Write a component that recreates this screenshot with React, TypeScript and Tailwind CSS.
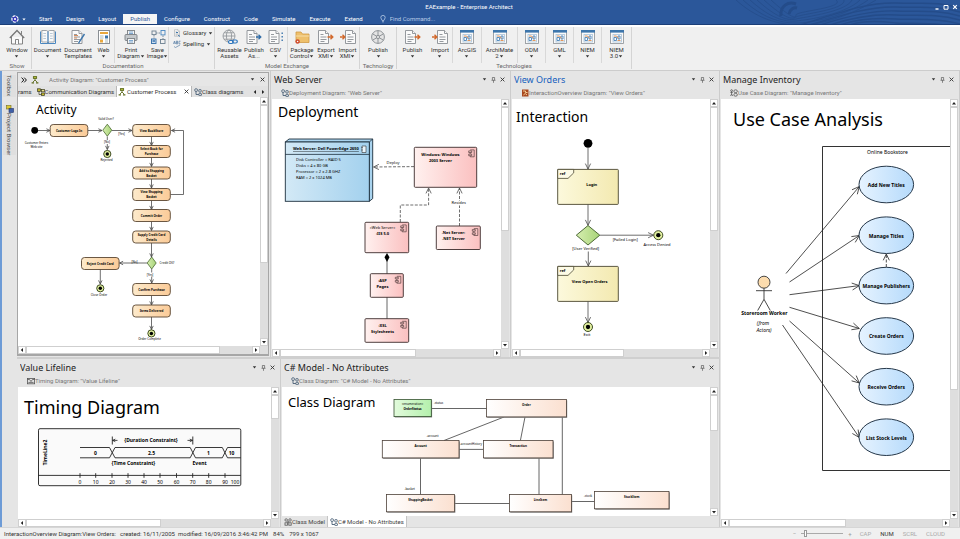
import React from 'react';

/* ---------- small helpers ---------- */

type Pt = [number, number];

const Caret: React.FC = () => (
  <svg width="5" height="3" viewBox="0 0 5 3" className="inline-block align-middle" aria-hidden="true">
    <path d="M0.8 0.2H4.2L2.5 2.4Z" fill="#333" />
  </svg>
);

/* Poly-line with an open arrow head on its last point */
const Arrow: React.FC<{ pts: Pt[]; head?: number; dashed?: boolean; color?: string }> = ({
  pts,
  head = 4,
  dashed,
  color = '#4a4a4a',
}) => {
  const [x2, y2] = pts[pts.length - 1];
  const [x1, y1] = pts[pts.length - 2];
  const a = Math.atan2(y2 - y1, x2 - x1);
  const wing = (d: number) => `${x2 - head * Math.cos(a + d)} ${y2 - head * Math.sin(a + d)}`;
  return (
    <g fill="none" stroke={color} strokeWidth="0.8">
      <polyline points={pts.map((p) => p.join(',')).join(' ')} strokeDasharray={dashed ? '3 1.5' : undefined} />
      <path d={`M${wing(0.45)}L${x2} ${y2}L${wing(-0.45)}`} />
    </g>
  );
};

const Label: React.FC<{
  x: number;
  y: number;
  size?: number;
  bold?: boolean;
  italic?: boolean;
  anchor?: 'start' | 'middle';
  underline?: boolean;
  children: React.ReactNode;
}> = ({ x, y, size = 4, bold, italic, anchor = 'middle', underline, children }) => (
  <text
    x={x}
    y={y + size * 0.36}
    fontSize={size}
    fontWeight={bold ? 700 : 400}
    fontStyle={italic ? 'italic' : undefined}
    textDecoration={underline ? 'underline' : undefined}
    textAnchor={anchor}
    fill="#000"
  >
    {children}
  </text>
);

const Title: React.FC<{ x: number; y: number; size: number; children: string }> = ({ x, y, size, children }) => (
  <text x={x} y={y} fontSize={size} fill="#000">
    {children}
  </text>
);

const Final: React.FC<{ x: number; y: number; r?: number }> = ({ x, y, r = 3.6 }) => (
  <g>
    <circle cx={x} cy={y} r={r} fill="#e2f0a0" stroke="#2d3a12" strokeWidth="0.9" />
    <circle cx={x} cy={y} r={r * 0.48} fill="#000" />
  </g>
);

const Fade: React.FC<{ id: string; from: string; to: string }> = ({ id, from, to }) => (
  <linearGradient id={id}>
    <stop offset="0" stopColor={from} />
    <stop offset="1" stopColor={to} />
  </linearGradient>
);

/* ---------- diagrams ---------- */

const Canvas: React.FC<{ x: number; y: number; w: number; h: number; name: string; children: React.ReactNode }> = ({
  x,
  y,
  w,
  h,
  name,
  children,
}) => (
  <svg
    width={w}
    height={h}
    viewBox={`${x} ${y} ${w} ${h}`}
    role="img"
    aria-label={name}
    className="block max-w-none font-['Noto_Sans',sans-serif]"
  >
    {children}
  </svg>
);

const steps: { y: number; lines: string[] }[] = [
  { y: 130.5, lines: ['View BookStore'] },
  { y: 151.5, lines: ['Select Book for', 'Purchase'] },
  { y: 173, lines: ['Add to Shopping', 'Basket'] },
  { y: 194.5, lines: ['View Shopping', 'Basket'] },
  { y: 215.5, lines: ['Commit Order'] },
  { y: 237, lines: ['Supply Credit Card', 'Details'] },
  { y: 289.5, lines: ['Confirm Purchase'] },
  { y: 311, lines: ['Items Delivered'] },
];

const Action: React.FC<{ cx: number; cy: number; lines: string[] }> = ({ cx, cy, lines }) => (
  <g>
    <rect x={cx - 18.8} y={cy - 6} width="37.6" height="12" rx="3" fill="url(#action)" stroke="#5a4632" strokeWidth="0.9" />
    {lines.map((l, i) => (
      <Label key={l} x={cx} y={cy + (i - (lines.length - 1) / 2) * 5} size={3} bold>
        {l}
      </Label>
    ))}
  </g>
);

const ActivityDiagram = () => (
  <Canvas x={18} y={97} w={242} h={251} name="Activity diagram">
    <defs>
      <Fade id="action" from="#fdeacb" to="#fbcb98" />
      <Fade id="choice" from="#d6eeb0" to="#a8d478" />
    </defs>
    <Title x={36} y={114} size={12}>Activity</Title>
    <circle cx="34.7" cy="130.3" r="3.4" />
    <Arrow pts={[[38, 130.5], [50, 130.5]]} />
    <Label x={36.5} y={142.5} size={3}>Customer Enters</Label>
    <Label x={36.5} y={147} size={3}>Web site</Label>
    <Action cx={69} cy={130.5} lines={['Customer Logs In']} />
    <Arrow pts={[[88, 130.5], [102, 130.5]]} />
    <Label x={106} y={118.7} size={3}>Valid User?</Label>
    <path d="M107.3 124.2L111.8 130.2L107.3 136.2L102.8 130.2Z" fill="url(#choice)" stroke="#4a6a30" strokeWidth="0.8" />
    <Arrow pts={[[112, 130.5], [132, 130.5]]} />
    <Label x={121.5} y={133.5} size={3}>[Yes]</Label>
    <Arrow pts={[[107.3, 136.5], [107.3, 149.5]]} />
    <rect x="103.5" y="140" width="7.5" height="4" fill="#fff" />
    <Label x={107} y={142} size={3}>[No]</Label>
    <Final x={107.3} y={154} />
    <Label x={106.5} y={159.7} size={3}>Rejected</Label>
    {[136.5, 157.5, 179, 200.5, 221.5].map((y) => (
      <Arrow key={y} pts={[[151.5, y], [151.5, y + 9]]} />
    ))}
    <Arrow pts={[[170.5, 194.5], [183.5, 194.5], [183.5, 130.5], [171.5, 130.5]]} />
    <Arrow pts={[[151.5, 243], [151.5, 257]]} />
    <path d="M151.7 257L156.2 263L151.7 269L147.2 263Z" fill="url(#choice)" stroke="#4a6a30" strokeWidth="0.8" />
    <Label x={167} y={262.6} size={3}>Credit OK?</Label>
    <Arrow pts={[[147, 263], [119.5, 263]]} />
    <Label x={134.5} y={262} size={3}>[No]</Label>
    <Action cx={100.3} cy={263.5} lines={['Reject Credit Card']} />
    <Arrow pts={[[100.3, 269.5], [100.3, 284]]} />
    <Final x={100.3} y={288.3} />
    <Label x={99} y={295.2} size={3}>Close Order</Label>
    <Arrow pts={[[151.7, 269], [151.7, 283]]} />
    <rect x="147" y="272.5" width="7.5" height="4" fill="#fff" />
    <Label x={150} y={274.5} size={3}>[Yes]</Label>
    <Arrow pts={[[151.5, 295.5], [151.5, 305]]} />
    <Arrow pts={[[151.5, 317], [151.5, 329.5]]} />
    <Final x={151.4} y={333.4} />
    <Label x={149.5} y={338.7} size={3}>Order Complete</Label>
    {steps.map((s) => (
      <Action key={s.y} cx={151.5} cy={s.y} lines={s.lines} />
    ))}
  </Canvas>
);

const Component: React.FC<{ x: number; y: number; w: number; h: number }> = ({ x, y, w, h }) => (
  <g fill="none" stroke="#3c2b2b">
    <rect x={x} y={y} width={w} height={h} rx="1" fill="url(#component)" strokeWidth="0.9" />
    <path
      strokeWidth="0.6"
      d={`M${x + w - 6.5} ${y + 2.6}H${x + w - 2.5}V${y + 9.5}H${x + w - 6.5}V${y + 8.5}M${x + w - 6.5} ${y + 5.2}V${y + 6.6}
      M${x + w - 8} ${y + 3.6}h3v1.6h-3zM${x + w - 8} ${y + 6.8}h3v1.6h-3z`}
    />
  </g>
);

const DeploymentDiagram = () => (
  <Canvas x={272} y={99} w={229} h={249} name="Deployment diagram">
    <defs>
      <Fade id="component" from="#fff1ef" to="#fbc0c0" />
      <Fade id="node" from="#d3e9f6" to="#a3d1ee" />
    </defs>
    <Title x={278} y={117} size={14}>Deployment</Title>
    <path d="M285.3 142L289 139H372.7V198.6L369.3 201.3V142Z" fill="#a9d3ee" stroke="#1d2f3d" strokeWidth="0.9" />
    <path d="M369.3 142L372.7 139" stroke="#1d2f3d" strokeWidth="0.8" />
    <rect x="285.3" y="142" width="84" height="59.3" fill="url(#node)" stroke="#1d2f3d" strokeWidth="0.9" />
    <path d="M285.3 154.4H369.3" stroke="#1d2f3d" strokeWidth="0.8" />
    <path d="M362 146h4v6.5h-4zM361.3 147.5h1.5M361.3 150h1.5" fill="#eaf5fc" stroke="#333" strokeWidth="0.6" />
    <Label x={293} y={149} size={4} bold underline anchor="start">Web Server: Dell PowerEdge 2650</Label>
    {['Disk Controller = RAID 5', 'Disks = 4 x 80 GB', 'Processor = 2 x 2.8 GHZ', 'RAM = 2 x 1024 MB'].map((t, i) => (
      <Label key={t} x={296} y={159.5 + i * 6} size={4} anchor="start">{t}</Label>
    ))}
    <Arrow pts={[[414, 166.6], [373.5, 167]]} head={6} dashed />
    <Label x={393} y={162.7}>Deploy</Label>
    <Component x={414.3} y={147.3} w={62.4} h={40} />
    <Label x={440.5} y={154.6} bold>Windows: Windows</Label>
    <Label x={440.5} y={160.4} bold>2003 Server</Label>
    <Arrow pts={[[400.3, 222], [400.3, 205], [428.6, 205], [428.6, 188]]} head={6} dashed />
    <Arrow pts={[[459.5, 226], [459.5, 188]]} head={6} dashed />
    <rect x="450" y="201" width="17" height="4.5" fill="#fff" />
    <Label x={458.7} y={203}>Resides</Label>
    <Component x={365} y={222.3} w={43.7} h={30.4} />
    <Label x={382.5} y={228}>«Web Server»</Label>
    <Label x={382.5} y={233.7} bold>:IIS 5.0</Label>
    <Component x={436.3} y={226} w={44} h={23.5} />
    <Label x={453.5} y={232.8} bold>.Net Server:</Label>
    <Label x={453.5} y={238.8} bold>.NET Server</Label>
    <path d="M387 258V274M387 297V319" stroke="#555" strokeWidth="0.9" />
    <path d="M387 253L389.5 257.3L387 262L384.5 257.3Z" />
    <Component x={370.3} y={273.7} w={33} h={23.6} />
    <Label x={382.5} y={280.5} bold>:ASP</Label>
    <Label x={382.5} y={286.5} bold>Pages</Label>
    <Component x={365} y={318.7} w={43.7} h={23.6} />
    <Label x={382.5} y={325.7} bold>:XSL</Label>
    <Label x={382.5} y={331.7} bold>Stylesheets</Label>
  </Canvas>
);

const RefFrame: React.FC<{ y: number; cx: number; text: string }> = ({ y, cx, text }) => (
  <g>
    <rect x="557.7" y={y} width="60.6" height="35" rx="0.8" fill="url(#frame)" stroke="#4a4630" strokeWidth="0.9" />
    <path d={`M557.7 ${y}H573.7V${y + 3.5}L568 ${y + 9}H557.7Z`} fill="#fdfbe6" stroke="#4a4630" strokeWidth="0.8" />
    <Label x={559.7} y={y + 4.6} bold anchor="start">ref</Label>
    <Label x={cx} y={y + 14.7} bold>{text}</Label>
  </g>
);

const InteractionDiagram = () => (
  <Canvas x={512} y={99} w={198} h={249} name="Interaction overview diagram">
    <defs>
      <Fade id="frame" from="#fcf9dc" to="#f3e9b0" />
    </defs>
    <Title x={516} y={121.5} size={14}>Interaction</Title>
    <circle cx="588" cy="143.3" r="4.4" />
    <Arrow pts={[[588, 148], [588, 169]]} head={6} />
    <RefFrame y={169.4} cx={591.7} text="Login" />
    <Arrow pts={[[588, 204.5], [588, 225.3]]} head={6} />
    <path d="M588 225.5L599.8 235.2L588 245L576.3 235.2Z" fill="url(#choice)" stroke="#3d5a28" strokeWidth="0.9" />
    <Arrow pts={[[600, 235.2], [653.5, 235.2]]} head={6} />
    <Final x={658.3} y={235.2} r={4.5} />
    <Label x={625.3} y={239.6}>[Failed Login]</Label>
    <Label x={657} y={244.9}>Access Denied</Label>
    <Label x={585.7} y={248.6}>[User Verified]</Label>
    <Arrow pts={[[588.3, 251.5], [588.3, 266]]} head={6} />
    <RefFrame y={266.4} cx={589.7} text="View Open Orders" />
    <Arrow pts={[[588, 301.5], [588, 322.5]]} head={6} />
    <Final x={588} y={327} r={4.5} />
    <Label x={587} y={334.8}>Exit</Label>
  </Canvas>
);

const useCases: { cy: number; name: string; from: Pt; to: Pt }[] = [
  { cy: 184.5, name: 'Add New Titles', from: [786, 273.5], to: [859.3, 186.5] },
  { cy: 235.2, name: 'Manage Titles', from: [789.5, 282], to: [859.3, 235.5] },
  { cy: 285.6, name: 'Manage Publishers', from: [789.5, 294.7], to: [859.3, 285.6] },
  { cy: 336, name: 'Create Orders', from: [789.5, 307.3], to: [859.3, 328.5] },
  { cy: 386.7, name: 'Receive Orders', from: [789.5, 321], to: [859.3, 383] },
  { cy: 437.2, name: 'List Stock Levels', from: [782.5, 325], to: [859.3, 437.5] },
];

const UseCaseDiagram = () => (
  <Canvas x={721} y={99} w={230} h={420} name="Use case diagram">
    <defs>
      <Fade id="usecase" from="#e6f3ff" to="#b5dafb" />
    </defs>
    <Title x={733} y={126} size={18}>Use Case Analysis</Title>
    <path d="M960 146.5H822.5V470.5H960" fill="none" stroke="#333" />
    <Label x={887.5} y={152.3} size={5}>Online Bookstore</Label>
    {useCases.map((u) => (
      <g key={u.name}>
        <Arrow pts={[u.from, u.to]} head={8} color="#222" />
        <ellipse cx="886.3" cy={u.cy} rx="27.3" ry="18.3" fill="url(#usecase)" stroke="#26384a" />
        <Label x={886.3} y={u.cy + 0.5} size={5} bold>{u.name}</Label>
      </g>
    ))}
    <Arrow pts={[[886.3, 267], [886.3, 254]]} head={7} dashed color="#222" />
    <g fill="none" stroke="#333" strokeWidth="0.9">
      <circle cx="764" cy="282.2" r="6" fill="#fcdcae" />
      <path d="M756 290.7H772M764 288.2V299.3L757.7 310.5M764 299.3L770.3 310.5" />
    </g>
    <Label x={764.3} y={313.4} size={5} bold>Storeroom Worker</Label>
    <Label x={763} y={323.6} size={5} italic>(from</Label>
    <Label x={764} y={330.5} size={5} italic>Actors)</Label>
  </Canvas>
);

const ticks = [80, 95.7, 112, 128, 144, 160, 176.5, 192.7, 208.7, 225, 235];

const TimingDiagram = () => (
  <Canvas x={18} y={387} w={253} h={132} name="Timing diagram">
    <Title x={24} y={413.7} size={18}>Timing Diagram</Title>
    <rect x="38.5" y="428.7" width="202.3" height="57" rx="1.5" fill="#fafafa" stroke="#333" />
    <g fill="none" stroke="#222" strokeWidth="0.9">
      <path d="M38.5 475.4H240.8" />
      <path d="M80 447.5H109.5L115 457.8H190.2L195.5 447.5H222.3L227.5 457.8H240.8" />
      <path d="M80 457.8H109.5L115 447.5H190.2L195.5 457.8H222.3L227.5 447.5H240.8" />
      <path d="M112.3 436.5V444.5M192.8 436.5V444.5" />
      {ticks.slice(0, 10).map((x) => (
        <path key={x} d={`M${x} 473.2V477.8`} />
      ))}
    </g>
    <Arrow pts={[[117.5, 440.4], [112.6, 440.4]]} head={3} color="#222" />
    <Arrow pts={[[187.5, 440.4], [192.5, 440.4]]} head={3} color="#222" />
    <Label x={151} y={440.2} size={5} bold>{'{Duration Constraint}'}</Label>
    <Label x={95.5} y={453} size={5} bold>0</Label>
    <Label x={151.5} y={453} size={5} bold>2.5</Label>
    <Label x={208.5} y={453} size={5} bold>1</Label>
    <Label x={231.5} y={453} size={5} bold>10</Label>
    <Label x={111.5} y={462.8} size={5} bold anchor="start">{'{Time Constraint}'}</Label>
    <Label x={192.5} y={462.8} size={5} bold anchor="start">Event</Label>
    <g transform="translate(45 452.5) rotate(-90)">
      <Label x={0} y={0} size={5} bold>TimeLine2</Label>
    </g>
    {ticks.map((x, i) => (
      <Label key={x} x={x} y={482} size={5}>{i * 10}</Label>
    ))}
  </Canvas>
);

const classes = [
  { name: 'Order', x: 485.4, y: 399.5, w: 80 },
  { name: 'Account', x: 381.3, y: 440.5, w: 76.7 },
  { name: 'Transaction', x: 482.4, y: 440.5, w: 69.6 },
  { name: 'ShoppingBasket', x: 385.4, y: 494.4, w: 68.2 },
  { name: 'LineItem', x: 508.4, y: 494.4, w: 62 },
  { name: 'StockItem', x: 593.5, y: 491.4, w: 74.5 },
];

const ClassDiagram = () => (
  <Canvas x={281} y={387} w={429} h={129} name="Class diagram">
    <defs>
      <Fade id="klass" from="#ffffff" to="#fbe0d0" />
      <Fade id="enum" from="#e2fbdc" to="#b4f0ac" />
    </defs>
    <Title x={287} y={407} size={13}>Class Diagram</Title>
    <path
      d="M430 408.5H486M503 417L443 440.5M524 417L519.4 440.5M561.3 417V494.5M538 458V494.5M458 449.4H482M419.5 458V494.5M453.5 503.5H508.5M570 501.5H593.5"
      fill="none"
      stroke="#555"
      strokeWidth="0.9"
    />
    <rect x="393.8" y="400.3" width="37.3" height="17.2" fill="#888" />
    <rect x="393" y="399.4" width="37.3" height="17.2" fill="url(#enum)" stroke="#35512f" strokeWidth="0.8" />
    <Label x={411.5} y={403.8} size={3}>«enumeration»</Label>
    <Label x={411.5} y={409} size={3} bold>OrderStatus</Label>
    {classes.map((c) => (
      <g key={c.name}>
        <rect x={c.x + 0.8} y={c.y + 0.9} width={c.w} height="17.4" fill="#888" />
        <rect x={c.x} y={c.y} width={c.w} height="17.4" fill="url(#klass)" stroke="#4d4038" strokeWidth="0.8" />
        <Label x={c.x + c.w / 2} y={c.y + 5.8} size={3} bold>{c.name}</Label>
      </g>
    ))}
    <Label x={437.5} y={402.7} size={3}>-status</Label>
    <Label x={431.5} y={436} size={3}>-account</Label>
    <Label x={470} y={444} size={3}>-accountHistory</Label>
    <Label x={408.7} y={489.3} size={3}>-basket</Label>
    <Label x={587} y={496} size={3}>-stock</Label>
  </Canvas>
);

/* ---------- panels ---------- */

const arrows = {
  up: 'M1 4.5L3 2L5 4.5Z',
  down: 'M1 2L3 4.5L5 2Z',
  left: 'M4 1L1.8 3L4 5Z',
  right: 'M2 1L4.2 3L2 5Z',
};

const ScrollButton: React.FC<{ dir: keyof typeof arrows }> = ({ dir }) => (
  <button
    aria-label={`Scroll ${dir}`}
    className="flex h-2 w-2 shrink-0 items-center justify-center border border-[#d0d0d0] bg-white"
  >
    <svg width="6" height="6" viewBox="0 0 6 6" className="shrink-0">
      <path d={arrows[dir]} fill="#222" />
    </svg>
  </button>
);

const VScroll: React.FC<{ size: number }> = ({ size }) => (
  <div className="flex w-2 shrink-0 flex-col bg-[#dedede]">
    <ScrollButton dir="up" />
    <div className="flex-1">
      <div className="border border-[#cfcfcf] bg-white" style={{ height: `${size}%` }} />
    </div>
    <ScrollButton dir="down" />
  </div>
);

const HScroll: React.FC<{ size: number }> = ({ size }) => (
  <div className="flex h-2 shrink-0 bg-[#dedede] pr-2">
    <ScrollButton dir="left" />
    <div className="flex flex-1">
      <div className="border border-[#cfcfcf] bg-white" style={{ width: `${size}%` }} />
    </div>
    <ScrollButton dir="right" />
  </div>
);

const View: React.FC<{ v: number; h?: number; children: React.ReactNode }> = ({ v, h, children }) => (
  <>
    <div className="flex min-h-0 flex-1 bg-white">
      <div className="min-w-0 flex-1 overflow-hidden">{children}</div>
      <VScroll size={v} />
    </div>
    {h !== undefined && <HScroll size={h} />}
  </>
);

const CloseIcon = () => (
  <svg width="5" height="5" viewBox="0 0 5 5">
    <path d="M0.6 0.6L4.4 4.4M4.4 0.6L0.6 4.4" stroke="#333" strokeWidth="0.9" />
  </svg>
);

const PinIcon = () => (
  <svg width="5" height="6" viewBox="0 0 5 6">
    <path d="M1.4 0.5H3.6V3.2M1.4 0.5V3.2M0.5 3.3H4.5M2.5 3.3V5.8" stroke="#444" strokeWidth="0.6" fill="none" />
  </svg>
);

const icons: Record<string, React.ReactNode> = {
  tree: (
    <g fill="none" stroke="#4a6076" strokeWidth="0.9">
      <rect x="0.8" y="0.8" width="2.6" height="2.6" rx="0.8" />
      <rect x="4.8" y="1.6" width="2.4" height="2.4" rx="0.6" />
      <rect x="4.8" y="5.4" width="2.6" height="2.2" rx="0.6" />
      <path d="M2 3.4V6.5H4.8" />
    </g>
  ),
  comm: (
    <g stroke="#3a3a20" strokeWidth="0.7">
      <path d="M2 3V6.5H5" fill="none" />
      <rect x="0.6" y="0.8" width="3" height="2.6" fill="#c5b92c" />
      <rect x="4.4" y="1.4" width="3" height="2.4" fill="#e6df8a" />
      <rect x="4.4" y="5" width="3" height="2.4" fill="#c5b92c" />
    </g>
  ),
  activity: (
    <g stroke="#5e6b1e" strokeWidth="0.9" fill="none">
      <rect x="2.4" y="0.6" width="3.2" height="1.8" fill="#b9c338" />
      <path d="M4 2.4V4M4 4L1.8 6.2M4 4L6.2 6.2" />
      <path d="M0.6 6.9H3M5 6.9H7.4" strokeWidth="1.2" />
    </g>
  ),
  overview: (
    <g>
      <rect x="1" y="0.5" width="6.5" height="7" fill="#a8481f" />
      <path d="M2 2H4.5V3.5H6.5M2.4 6L4.2 4.5L6 6" stroke="#fbd9a0" strokeWidth="0.9" fill="none" />
    </g>
  ),
  usecase: (
    <g stroke="#555" strokeWidth="0.8" fill="none">
      <circle cx="1.6" cy="1.6" r="0.9" />
      <path d="M1.6 2.6V5L0.6 7M1.6 5L2.6 7M0.4 3.4H2.8" />
      <ellipse cx="5.6" cy="2.2" rx="1.8" ry="1.4" />
      <ellipse cx="5.6" cy="5.8" rx="1.8" ry="1.4" />
    </g>
  ),
  timing: (
    <g stroke="#555" strokeWidth="0.8" fill="none">
      <rect x="0.4" y="1.4" width="7.2" height="5.4" />
      <path d="M0.4 2.5H2.5L4 4.5L5.5 2.5H7.6M1.4 5.4H6.6" />
    </g>
  ),
  grid: (
    <g stroke="#555" strokeWidth="0.8" fill="none">
      <rect x="1" y="0.8" width="2.4" height="2.4" rx="1" />
      <rect x="4.8" y="0.8" width="2.4" height="2.4" rx="1" />
      <rect x="1" y="4.8" width="2.4" height="2.4" />
      <rect x="4.8" y="4.8" width="2.4" height="2.4" />
      <path d="M3.4 3.2L4.8 4.8M4.8 3.2L3.4 4.8" />
    </g>
  ),
};

const MiniIcon: React.FC<{ name: string }> = ({ name }) => (
  <svg width="8" height="8" viewBox="0 0 8 8" className="shrink-0" aria-hidden="true">
    {icons[name]}
  </svg>
);

interface PanelProps {
  title: string;
  subtitle: string;
  icon: string;
  active?: boolean;
  children: React.ReactNode;
}

const Panel: React.FC<PanelProps> = ({ title, subtitle, icon, active, children }) => (
  <section className="flex min-h-0 min-w-0 flex-col border-r border-[#cccccc] pr-px pl-px">
    <header className="h-7 shrink-0 overflow-hidden">
      <div className="flex h-4 items-center gap-1 pt-px pr-1 pl-[2px]">
        <h2 className={`flex-1 truncate text-[9px] leading-3 ${active ? 'text-[#1560bd]' : 'text-[#222]'}`}>{title}</h2>
        <button aria-label="Menu" className="flex w-[5px]"><Caret /></button>
        <button aria-label="Pin" className="flex w-[5px]"><PinIcon /></button>
        <button aria-label="Close" className="flex w-[5px]"><CloseIcon /></button>
      </div>
      <p className="flex h-3 items-center truncate pl-[9px] font-['Roboto',sans-serif] text-[6px] leading-[8px] text-[#777]">
        <MiniIcon name={icon} />
        {subtitle}
      </p>
    </header>
    {children}
  </section>
);

const ActivityPanel = () => (
  <section className="flex min-h-0 min-w-0 flex-col border-r border-[#cccccc] pr-px pb-px font-['Roboto',sans-serif] text-[6px] leading-[8px]">
    <div className="mt-px flex min-h-0 flex-1 flex-col border border-b-2 border-[#a6a6a6]">
      <div className="flex h-[13px] shrink-0 items-center bg-[#e6e6e6] pr-[3px] pl-[3px] text-[#777]">
        <svg width="6" height="6" viewBox="0 0 6 6" className="mr-1">
          <path d="M0.6 0.6L2.8 3L0.6 5.4M3.2 0.6L5.4 3L3.2 5.4" fill="none" stroke="#111" />
        </svg>
        <MiniIcon name="activity" />
        <span className="ml-[10px] flex-1 truncate">Activity Diagram: "Customer Process"</span>
        <button aria-label="Window list" className="mr-[5px] flex"><Caret /></button>
        <button aria-label="Close diagram" className="flex"><CloseIcon /></button>
      </div>
      <div role="tablist" className="flex h-[11px] shrink-0 items-stretch overflow-hidden bg-[#e2e2e2] text-[#333]">
        <button role="tab" className="pr-[5px]">rams</button>
        <button role="tab" className="flex items-center whitespace-nowrap pr-[2px]">
          <MiniIcon name="comm" />
          Communication Diagrams
        </button>
        <button role="tab" aria-selected="true" className="flex w-[76px] items-center gap-px border-x border-[#b8b8b8] bg-white pl-px whitespace-nowrap">
          <MiniIcon name="activity" />
          <span className="flex-1 text-left">Customer Process</span>
          <span className="pr-[2px]"><CloseIcon /></span>
        </button>
        <button role="tab" className="flex flex-1 items-center whitespace-nowrap pl-[2px]">
          <MiniIcon name="tree" />
          Class diagrams
        </button>
        <button aria-label="Previous tab" className="flex w-2 items-center">
          <svg width="6" height="6" viewBox="0 0 6 6"><path d={arrows.left} fill="#222" /></svg>
        </button>
        <button aria-label="Next tab" className="flex w-2 items-center">
          <svg width="6" height="6" viewBox="0 0 6 6"><path d={arrows.right} fill="#222" /></svg>
        </button>
      </div>
      <View v={68} h={86}>
        <ActivityDiagram />
      </View>
    </div>
  </section>
);

/* ---------- ribbon ---------- */

const Page: React.FC<{ x?: number }> = ({ x = 3 }) => (
  <g fill="#fafafa" stroke="#8a8f94" strokeWidth="0.9">
    <path d={`M${x} 1.5H${x + 7}L${x + 10} 4.5V14.5H${x}Z`} />
    <path d={`M${x + 7} 1.5V4.5H${x + 10}M${x + 2} 5.5H${x + 5}M${x + 2} 8H${x + 8}M${x + 2} 10.5H${x + 8}M${x + 2} 12.5H${x + 6}`} />
  </g>
);

const chart = (
  <g>
    <rect x="1.5" y="1.5" width="13" height="13" fill="#fafafa" stroke="#8a8f94" strokeWidth="0.8" />
    <rect x="1" y="1" width="14" height="2.6" fill="#3d76ac" />
    <rect x="4" y="5.5" width="8.5" height="7.5" fill="none" stroke="#a9c3da" strokeWidth="0.8" />
    <path d="M5 11.5V8.5H7.5V11.5ZM9 10V7H11V10Z" fill="none" stroke="#4a83ba" strokeWidth="0.9" />
    <path d="M5 7H7.5L9.5 9.5M8.5 11.5H11.5" fill="none" stroke="#dc8a48" strokeWidth="0.9" />
  </g>
);

const ribbonIcons: Record<string, React.ReactNode> = {
  window: (
    <g fill="#fafafa" stroke="#777" strokeWidth="0.9">
      <path d="M2.5 8V15H13.5V8" />
      <path d="M0.8 9L8 1.5L15.2 9" fill="none" strokeWidth="1.3" />
      <path d="M6.5 15V10.5H9.5V15M12.5 2V5.5" />
    </g>
  ),
  document: (
    <g>
      <path d="M0.5 2.5V14.5H15.5V2.5" fill="#fff" stroke="#4a87c0" />
      <path d="M1.8 1.5H6.5L8 2.5L9.5 1.5H14.2V13H9.5L8 14L6.5 13H1.8Z" fill="#fafafa" stroke="#8a8f94" strokeWidth="0.8" />
      <path d="M8 2.5V14" stroke="#3d76ac" strokeWidth="1.2" />
      <path d="M3.3 4.5H6M3.3 7H6M3.3 9.5H6M10 4.5H12.7M10 7H12.7M10 9.5H12.7" stroke="#a9bccd" strokeWidth="0.8" />
    </g>
  ),
  templates: (
    <g>
      <Page x={2} />
      <path d="M4 6.5H8M4 9H7" stroke="#d98e5c" />
      <path d="M14.5 5L9.5 12.5L8.5 14.5" stroke="#3d76ac" strokeWidth="1.4" fill="none" />
    </g>
  ),
  web: (
    <g>
      <rect x="2.5" y="1.5" width="11" height="13" fill="#fff" stroke="#8a8f94" />
      <path d="M4 4H12" stroke="#e9a83e" strokeWidth="2" />
      <path d="M4 7H7.5M4 9H7.5M9 11H12M9 13H12" stroke="#9aa" strokeWidth="0.8" />
      <rect x="9" y="6.5" width="3" height="3" fill="#3d76ac" />
      <rect x="4" y="10.5" width="3" height="3" fill="#e9a83e" />
    </g>
  ),
  print: (
    <g fill="#f4f4f4" stroke="#7a7f84" strokeWidth="0.9">
      <rect x="4.5" y="1.5" width="7" height="5" />
      <rect x="2" y="5.5" width="12" height="6" rx="1" fill="#c4c8cb" />
      <rect x="4.5" y="9.5" width="7" height="5" />
      <path d="M6 3H10M6 4.5H10M6 11.5H10M6 13H10" stroke="#4a87c0" strokeWidth="0.7" />
    </g>
  ),
  save: (
    <g fill="none" stroke="#6c7f90" strokeWidth="0.9">
      <rect x="2" y="2" width="4" height="3.6" />
      <rect x="11" y="1.5" width="4" height="4.4" stroke="#4a87c0" />
      <path d="M6 4H11M13 6.5V10M4 6V9.5" strokeDasharray="1.5 1" />
      <rect x="1.5" y="10" width="4.5" height="4.5" stroke="#2f6ba6" fill="#cfe0f0" />
      <path d="M2.5 12H5" stroke="#2f6ba6" strokeWidth="1.4" />
      <rect x="10.5" y="10.5" width="4.5" height="4" />
    </g>
  ),
  reusable: (
    <g fill="none" stroke="#8a8f94" strokeWidth="0.8">
      <circle cx="7" cy="7" r="6" />
      <ellipse cx="7" cy="7" rx="2.6" ry="6" />
      <path d="M1 7H13M2 3.8H12M2 10.2H12" />
      <rect x="6.5" y="11.5" width="4.8" height="3" rx="1.5" fill="#f0f0f0" stroke="#2f76bd" strokeWidth="1.2" />
      <rect x="10.5" y="11" width="4.8" height="3" rx="1.5" stroke="#2f76bd" strokeWidth="1.2" />
    </g>
  ),
  publishAs: (
    <g>
      <Page x={1} />
      <path d="M10 8H14M12.5 5.8L14.8 8L12.5 10.2" stroke="#2f6ba6" strokeWidth="1.3" fill="none" />
    </g>
  ),
  csv: (
    <g>
      <Page x={1} />
      <path d="M14.2 3.5V5M14.2 7V8.5M14.2 10.5V12" stroke="#3d76ac" strokeWidth="1.4" />
    </g>
  ),
  package: (
    <g>
      <path d="M2 3H7L8.5 5H15V13.5H2Z" fill="#eec06c" stroke="#cf9b45" strokeWidth="0.8" />
      <path d="M2 7H15" stroke="#f7dda6" />
      <circle cx="3.6" cy="12.5" r="2.2" fill="#cf4a2c" />
      <circle cx="3.6" cy="12.5" r="0.8" fill="#fff" />
    </g>
  ),
  export: (
    <g>
      <Page x={0.5} />
      <path d="M9.5 8H14M12.5 5.8L14.8 8L12.5 10.2" stroke="#d2692c" strokeWidth="1.4" fill="none" />
    </g>
  ),
  import: (
    <g>
      <Page x={5.5} />
      <path d="M0 8H4M2.5 5.8L4.8 8L2.5 10.2" stroke="#d2692c" strokeWidth="1.4" fill="none" />
    </g>
  ),
  wheel: (
    <g fill="#e4e4e4" stroke="#8f9498" strokeWidth="1">
      <circle cx="8" cy="8" r="6.4" />
      <path d="M8 1.6V14.4M2.5 4.8L13.5 11.2M13.5 4.8L2.5 11.2" />
      <circle cx="8" cy="8" r="1.6" />
    </g>
  ),
  chart,
};

interface Item {
  icon: string;
  lines: string[];
  width: string;
  caret?: boolean;
  divider?: boolean;
}

const RibbonItem: React.FC<{ item: Item }> = ({ item }) => (
  <button
    className={`flex h-9 shrink-0 flex-col items-center pt-[2px] ${item.width} ${
      item.divider ? 'border-r border-[#d8d8d8]' : ''
    }`}
  >
    <svg width="16" height="16" viewBox="0 0 16 16" className="shrink-0">
      {ribbonIcons[item.icon]}
    </svg>
    <span className="mt-[2px] flex flex-col items-center leading-[6px] whitespace-nowrap">
      <span>{item.lines[0]}</span>
      <span className="flex h-[6px] items-center">
        {item.lines[1]}
        {item.caret && <Caret />}
      </span>
    </span>
  </button>
);

const Group: React.FC<{ name: string; items: Item[]; children?: React.ReactNode }> = ({ name, items, children }) => (
  <div className="flex shrink-0 flex-col border-r border-[#d4d4d4]">
    <div className="flex">
      {items.map((item, i) => (
        <RibbonItem key={i} item={item} />
      ))}
      {children}
    </div>
    <div className="text-center leading-[6px] text-[#666]">{name}</div>
  </div>
);

const groups: { name: string; items: Item[] }[] = [
  { name: 'Show', items: [{ icon: 'window', lines: ['Window'], width: 'w-[28px]', caret: true }] },
  {
    name: 'Documentation',
    items: [
      { icon: 'document', lines: ['Document'], width: 'w-[31px]', caret: true },
      { icon: 'templates', lines: ['Document', 'Templates'], width: 'w-[30px]' },
      { icon: 'web', lines: ['Web'], width: 'w-[22px]', caret: true, divider: true },
      { icon: 'print', lines: ['Print', 'Diagram'], width: 'w-[32px]', caret: true },
      { icon: 'save', lines: ['Save', 'Image'], width: 'w-[22px]', caret: true, divider: true },
    ],
  },
  {
    name: 'Model Exchange',
    items: [
      { icon: 'reusable', lines: ['Reusable', 'Assets'], width: 'w-[29px]' },
      { icon: 'publishAs', lines: ['Publish', 'As...'], width: 'w-[20px]' },
      { icon: 'csv', lines: ['CSV'], width: 'w-[24px]', caret: true, divider: true },
      { icon: 'package', lines: ['Package', 'Control'], width: 'w-[28px]', caret: true },
      { icon: 'export', lines: ['Export', 'XMI'], width: 'w-[20px]', caret: true },
      { icon: 'import', lines: ['Import', 'XMI'], width: 'w-[23px]', caret: true },
    ],
  },
  { name: 'Technology', items: [{ icon: 'wheel', lines: ['Publish'], width: 'w-[36px]', caret: true }] },
  {
    name: 'Technologies',
    items: [
      { icon: 'export', lines: ['Publish'], width: 'w-[31px]', caret: true },
      { icon: 'import', lines: ['Import'], width: 'w-[25px]', caret: true, divider: true },
      { icon: 'chart', lines: ['ArcGIS'], width: 'w-[29px]', caret: true, divider: true },
      { icon: 'chart', lines: ['ArchiMate', '2'], width: 'w-[36px]', caret: true, divider: true },
      { icon: 'chart', lines: ['ODM'], width: 'w-[28px]', caret: true, divider: true },
      { icon: 'chart', lines: ['GML'], width: 'w-[28px]', caret: true, divider: true },
      { icon: 'chart', lines: ['NIEM'], width: 'w-[28px]', caret: true, divider: true },
      { icon: 'chart', lines: ['NIEM', '3.0'], width: 'w-[29px]', caret: true },
    ],
  },
];

const menu = ['Start', 'Design', 'Layout', 'Publish', 'Configure', 'Construct', 'Code', 'Simulate', 'Execute', 'Extend'];

const TitleBar = () => (
  <header className="relative flex h-[25px] shrink-0 flex-col overflow-hidden border-b border-[#1c3f78] bg-[#2b579a] text-white">
    <svg width="224" height="24" viewBox="0 0 224 24" className="absolute top-0 right-0" fill="none" stroke="#244c8a" aria-hidden="true">
      {[0, 1, 2, 3, 4, 5].map((i) => (
        <path key={i} strokeWidth="0.8" d={`M${i * 7} 0C${20 + i * 7} 18 ${40 + i * 4} ${24 - i} 60 ${25 - i * 2}S110 ${18 - i * 2} ${140 - i * 8} 0`} />
      ))}
      {[0, 1, 2, 3, 4, 5].map((i) => (
        <path key={`r${i}`} strokeWidth="1.4" d={`M${64 + i * 10} 25C${100 + i * 6} ${14 + i} ${130 + i * 4} ${2 + i * 4} 160 ${3 + i * 4}S200 ${1 + i * 4} 224 ${8 + i * 4}`} />
      ))}
      <path strokeWidth="3" d="M45 16C44 6 52 1 60 4M53 14C54 9 58 7 61 8" />
    </svg>
    <div className="relative flex h-[14px] items-center justify-between">
      <span className="w-1" />
      <h1 className="leading-[8px]">EAExample - Enterprise Architect</h1>
      <div className="flex gap-[3px] pr-[2px]">
        <button aria-label="Minimize">
          <svg width="6" height="6" viewBox="0 0 6 6"><path d="M1.5 5H4.5" stroke="#fff" strokeWidth="1.4" /></svg>
        </button>
        <button aria-label="Maximize">
          <svg width="6" height="6" viewBox="0 0 6 6"><path d="M1 1.5H5V5.2H1Z" stroke="#fff" fill="none" /></svg>
        </button>
        <button aria-label="Close">
          <svg width="6" height="6" viewBox="0 0 6 6"><path d="M1.2 1.2L4.8 4.8M4.8 1.2L1.2 4.8" stroke="#fff" strokeWidth="1.2" /></svg>
        </button>
      </div>
    </div>
    <nav className="relative flex flex-1 items-stretch">
      <button aria-label="Application menu" className="flex w-8 items-center gap-[3px] pl-[11px]">
        <svg width="8" height="8" viewBox="0 0 8 8">
          <circle cx="4" cy="4" r="3.1" fill="#3434b8" stroke="#fff" strokeWidth="1.2" strokeDasharray="3 0.9" />
          <circle cx="4" cy="4" r="1.1" fill="#fff" />
        </svg>
        <svg width="4" height="3" viewBox="0 0 4 3"><path d="M0.4 0.4H3.6L2 2.4Z" fill="#fff" /></svg>
      </button>
      {menu.map((m) => (
        <button key={m} className={`px-[7px] ${m === 'Publish' ? 'bg-[#f5f5f5] text-[#2b579a]' : ''}`}>
          {m}
        </button>
      ))}
      <label className="ml-[10px] flex items-center gap-1 text-[#b9cbe6]">
        <svg width="6" height="8" viewBox="0 0 6 8" fill="none" stroke="#b9cbe6" strokeWidth="0.8">
          <path d="M2 5.4C2 4.4 0.8 4 0.8 2.6A2.2 2.2 0 0 1 5.2 2.6C5.2 4 4 4.4 4 5.4ZM2 6.8H4" />
        </svg>
        <input aria-label="Find Command" placeholder="Find Command..." className="w-[60px] bg-transparent outline-none placeholder:text-[#b9cbe6]" />
      </label>
    </nav>
  </header>
);

const Ribbon = () => (
  <div className="flex h-[46px] shrink-0 overflow-hidden border-t-2 border-b border-t-white border-b-[#cccccc] bg-[#f0f0f0] pl-[3px] pb-px text-[#333]">
    {groups.map((g) => (
      <Group key={g.name} name={g.name} items={g.items}>
        {g.name === 'Documentation' && (
          <div className="flex w-[45px] flex-col gap-[3px] pt-[2px] pl-1">
            <button className="flex h-2 items-center gap-[2px]">
              <svg width="8" height="8" viewBox="0 0 16 16"><Page /><path d="M6 7H10M10 12L14 15" stroke="#3d76ac" strokeWidth="2" /></svg>
              Glossary
              <Caret />
            </button>
            <button className="flex h-2 items-center gap-[2px]">
              <svg width="8" height="8" viewBox="0 0 8 8" fill="none" stroke="#5a7fa6" strokeWidth="0.7">
                <path d="M0.5 4L1.5 1L2.5 4M0.9 3H2.1M3.4 1V4H4.6V2.5H3.4M3.4 1H4.5V2.5M7.5 1.2H6V3.8H7.5M1 6.5L2.5 7.5L7 5" />
              </svg>
              Spelling
              <Caret />
            </button>
          </div>
        )}
      </Group>
    ))}
  </div>
);

const SideTabs = () => (
  <aside className="flex w-[17px] shrink-0 flex-col items-start gap-2 border-l-2 border-[#6d9bd6] pt-1 pl-px text-[#444]">
    <button className="h-[22px] w-[13px] bg-[#dfdfdf] leading-[13px] [writing-mode:vertical-rl]">Toolbox</button>
    <button className="flex h-[50px] w-[13px] items-center justify-center bg-[#dfdfdf] leading-[13px] [writing-mode:vertical-rl]">
      <svg width="8" height="8" viewBox="0 0 8 8" className="shrink-0">
        <rect x="0.5" y="0.5" width="4.5" height="3.5" fill="#dcc934" stroke="#77701e" strokeWidth="0.6" />
        <rect x="3" y="3.5" width="4.5" height="4" fill="#3f5fa8" stroke="#23366b" strokeWidth="0.6" />
      </svg>
      <span className="whitespace-nowrap">Project Browser</span>
    </button>
  </aside>
);

const StatusBar = () => (
  <footer className="flex h-3 shrink-0 items-center border-t border-[#d6d6d6] bg-[#f0f0f0] pl-1 whitespace-pre text-[#333]">
    <span>InteractionOverview Diagram:View Orders:</span>
    <span className="ml-1">created: 16/11/2005  modified: 16/09/2016 3:46:42 PM</span>
    <span className="ml-[5px]">84%</span>
    <span className="ml-[5px] flex-1">799 x 1067</span>
    <div className="flex items-center gap-[5px] text-[#999]">
      <button aria-label="Zoom out">−</button>
      <input
        type="range"
        aria-label="Zoom"
        defaultValue={8}
        className="h-2 w-[42px] appearance-none bg-[linear-gradient(#aaa,#aaa)] bg-[length:100%_1px] bg-center bg-no-repeat [&::-webkit-slider-thumb]:h-[7px] [&::-webkit-slider-thumb]:w-[3px] [&::-webkit-slider-thumb]:appearance-none [&::-webkit-slider-thumb]:border [&::-webkit-slider-thumb]:border-[#999] [&::-webkit-slider-thumb]:bg-white"
      />
      <button aria-label="Zoom in">+</button>
    </div>
    <div className="flex gap-[9px] pr-[15px] pl-[8px] text-[#aaa]">
      <span>CAP</span>
      <span className="text-[#333]">NUM</span>
      <span>SCRL</span>
      <span>CLOUD</span>
    </div>
  </footer>
);

const App: React.FC = () => (
  <div className="flex h-screen flex-col overflow-hidden bg-[#e5e5e5] font-['Roboto',sans-serif] text-[6px] leading-[8px]">
    <TitleBar />
    <Ribbon />
    <main className="flex min-h-0 flex-1">
      <SideTabs />
      <div className="grid min-h-0 min-w-0 flex-1 grid-cols-[703fr_240fr] grid-rows-[minmax(0,1fr)] font-['Noto_Sans',sans-serif]">
        <div className="grid min-h-0 min-w-0 grid-rows-[288fr_168fr]">
          <div className="grid min-h-0 grid-cols-[254fr_240fr_209fr] grid-rows-[minmax(0,1fr)] border-b-2 border-[#cfcfcf]">
            <ActivityPanel />
            <Panel title="Web Server" subtitle={'Deployment Diagram: "Web Server"'} icon="tree">
              <View v={53} h={64}>
                <DeploymentDiagram />
              </View>
            </Panel>
            <Panel title="View Orders" subtitle={'InteractionOverview Diagram: "View Orders"'} icon="overview" active>
              <View v={53} h={57}>
                <InteractionDiagram />
              </View>
            </Panel>
          </div>
          <div className="grid min-h-0 grid-cols-[264fr_439fr] grid-rows-[minmax(0,1fr)]">
            <Panel title="Value Lifeline" subtitle={'Timing Diagram: "Value Lifeline"'} icon="timing">
              <View v={21} h={57}>
                <TimingDiagram />
              </View>
            </Panel>
            <Panel title="C# Model - No Attributes" subtitle={'Class Diagram: "C# Model - No Attributes"'} icon="tree">
              <View v={32}>
                <ClassDiagram />
              </View>
              <div role="tablist" className="flex h-[11px] shrink-0 font-['Roboto',sans-serif] text-[#444]">
                <button role="tab" className="flex items-center px-[2px]">
                  <MiniIcon name="grid" />
                  Class Model
                </button>
                <button role="tab" aria-selected="true" className="flex items-center border-x border-[#c4c4c4] bg-white px-[2px]">
                  <MiniIcon name="tree" />
                  C# Model - No Attributes
                </button>
              </div>
            </Panel>
          </div>
        </div>
        <Panel title="Manage Inventory" subtitle={'Use Case Diagram: "Manage Inventory"'} icon="usecase">
          <View v={70} h={55}>
            <UseCaseDiagram />
          </View>
        </Panel>
      </div>
    </main>
    <StatusBar />
  </div>
);

export default App;
